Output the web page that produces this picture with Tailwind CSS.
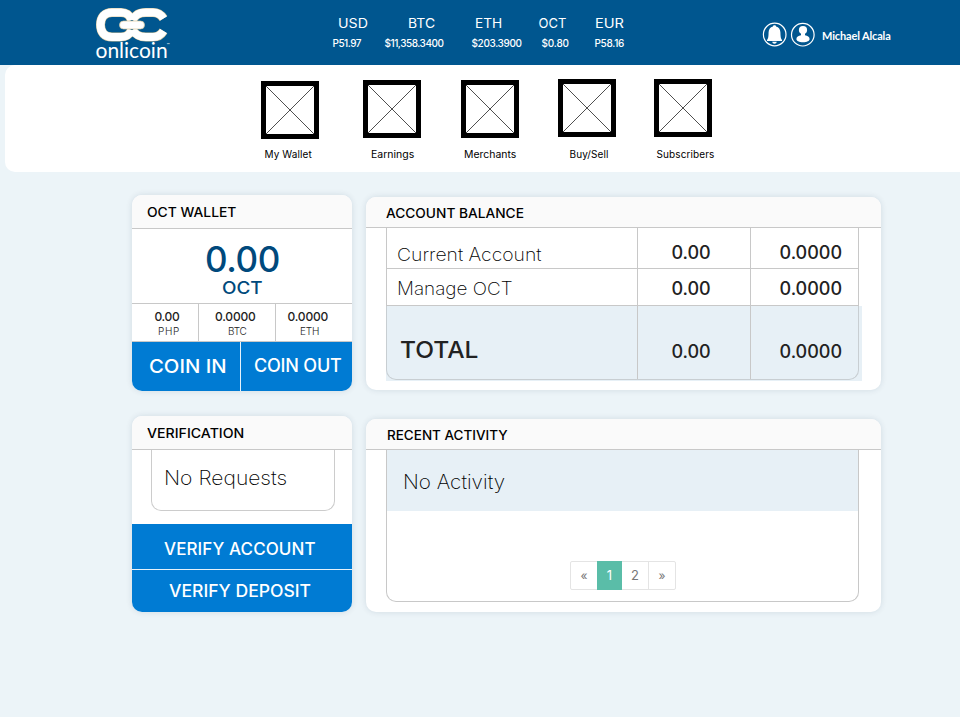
<!DOCTYPE html>
<html lang="en">
<head>
<meta charset="utf-8">
<title>Onlicoin Dashboard</title>
<script src="https://cdn.jsdelivr.net/npm/@tailwindcss/browser@4"></script>
</head>
<body class="bg-[#ecf4f8] font-['Inter',sans-serif] text-black whitespace-nowrap leading-none w-[960px] h-[717px] overflow-hidden">

<header class="flex h-[65px] bg-[#00568f] text-white">
  <div class="ml-[95px] w-[237px] pt-[7px]">
    <svg class="block" width="73" height="36" viewBox="95 7 73 36" fill="none">
      <g stroke="#d9c79c" stroke-width="9">
        <path d="M131.500 20C129.500 15 127 12.500 121 12.500H112C104.500 12.500 100.500 17 100.500 24.800S104.500 37 112 37H121C127 37 129.500 34.500 131.500 30"/>
        <path d="M163.500 18.500C161 14.500 158 12.500 153 12.500H146C138.500 12.500 135.500 15 132.500 20M163.500 31C161 35 158 37 153 37H146C138.500 37 135.500 34.500 132.500 30"/>
      </g>
      <g stroke="#fff" stroke-width="8">
        <path d="M131.500 20C129.500 15 127 12.500 121 12.500H112C104.500 12.500 100.500 17 100.500 24.800S104.500 37 112 37H121C127 37 129.500 34.500 131.500 30"/>
        <path d="M163.500 18.500C161 14.500 158 12.500 153 12.500H146C138.500 12.500 135.500 15 132.500 20M163.500 31C161 35 158 37 153 37H146C138.500 37 135.500 34.500 132.500 30"/>
      </g>
      <rect x="119.500" y="21" width="25" height="8" rx="4" fill="#fff" stroke="#d9c79c" stroke-width=".7"/>
    </svg>
    <div class="flex items-start -mt-[3px] pl-[0.500px] font-['Lato'] text-[21px] leading-[20px]">onlicoin<span class="-ml-px text-[4px] leading-[10px]">™</span></div>
  </div>
  <div class="w-[430px]">
    <div class="grid grid-cols-[70px_67.500px_63.500px_56px_60px] pl-[5.500px] pt-[17px] text-[13px]">
      <span class="origin-left scale-x-[1.09]">USD</span><span class="origin-left scale-x-[1.07]">BTC</span><span class="origin-left scale-x-[1.05]">ETH</span><span>OCT</span><span class="origin-left scale-x-[1.12]">EUR</span>
    </div>
    <div class="grid grid-cols-[52px_87px_70px_53px_60px] pl-[0.500px] pt-[8px] text-[10px] font-medium">
      <span class="tracking-[-0.5px]">P51.97</span><span class="tracking-[-0.47px]">$11,358.3400</span><span class="tracking-[-0.37px]">$203.3900</span><span class="tracking-[-0.18px]">$0.80</span><span class="tracking-[-0.3px]">P58.16</span>
    </div>
  </div>
  <div class="flex items-center pb-[1px] pt-[5px]">
    <svg width="25" height="25" viewBox="0 0 25 25" fill="none">
      <circle cx="12.700" cy="12.500" r="11.300" stroke="#fff" stroke-width="1.200"/>
      <path d="M12.500 3.200c.9 0 1.500.5 1.600 1.300 2.700.7 4.200 3 4.300 5.800.1 4.200.3 6.500 1.600 7.800v.9H5v-.9c1.300-1.300 1.500-3.600 1.600-7.800.1-2.800 1.600-5.100 4.300-5.800.1-.8.700-1.300 1.600-1.300ZM10.200 19.800h4.600c-.2 1.300-1.100 2-2.300 2s-2.100-.7-2.300-2Z" fill="#fff"/>
    </svg>
    <svg class="ml-[3px]" width="25" height="25" viewBox="0 0 25 25" fill="none">
      <circle cx="12.800" cy="12.700" r="11.300" stroke="#fff" stroke-width="1.200"/>
      <circle cx="13" cy="8" r="4.100" fill="#fff"/>
      <path d="M11 11h4v2.200c2.500.4 4.600 1.500 4.600 3.800 0 2-2.700 3.200-6.600 3.200S6.400 19 6.400 17c0-2.300 2.100-3.400 4.600-3.800Z" fill="#fff"/>
    </svg>
    <span class="ml-[7px] mt-[1px] font-['Lato'] text-[11px] font-bold tracking-[-0.15px]">Michael Alcala</span>
  </div>
</header>

<nav class="ml-[5px] flex h-[107px] rounded-l-[10px] bg-white pl-[256px] text-[10px]">
  <div class="w-[102px] pt-[16px]">
    <svg class="block" width="58" height="58" viewBox="0 0 58 58" fill="none"><rect x="2.500" y="2.500" width="53" height="53" stroke="#000" stroke-width="5"/><path d="M5 5 53 53M53 5 5 53" stroke="#222" stroke-width=".8"/></svg>
    <div class="ml-[3.500px] mt-[10px] tracking-[0.11px]">My Wallet</div>
  </div>
  <div class="w-[98px] pt-[15px]">
    <svg class="block" width="58" height="58" viewBox="0 0 58 58" fill="none"><rect x="2.500" y="2.500" width="53" height="53" stroke="#000" stroke-width="5"/><path d="M5 5 53 53M53 5 5 53" stroke="#222" stroke-width=".8"/></svg>
    <div class="ml-[7.500px] mt-[11px] origin-left scale-x-[1.05]">Earnings</div>
  </div>
  <div class="w-[97px] pt-[15px]">
    <svg class="block" width="58" height="58" viewBox="0 0 58 58" fill="none"><rect x="2.500" y="2.500" width="53" height="53" stroke="#000" stroke-width="5"/><path d="M5 5 53 53M53 5 5 53" stroke="#222" stroke-width=".8"/></svg>
    <div class="ml-[2.500px] mt-[11px] origin-left scale-x-[1.045]">Merchants</div>
  </div>
  <div class="w-[96px] pt-[14px]">
    <svg class="block" width="58" height="58" viewBox="0 0 58 58" fill="none"><rect x="2.500" y="2.500" width="53" height="53" stroke="#000" stroke-width="5"/><path d="M5 5 53 53M53 5 5 53" stroke="#222" stroke-width=".8"/></svg>
    <div class="ml-[11.500px] mt-[12px] tracking-[0.1px]">Buy/Sell</div>
  </div>
  <div class="pt-[14px]">
    <svg class="block" width="58" height="58" viewBox="0 0 58 58" fill="none"><rect x="2.500" y="2.500" width="53" height="53" stroke="#000" stroke-width="5"/><path d="M5 5 53 53M53 5 5 53" stroke="#222" stroke-width=".8"/></svg>
    <div class="ml-[2.500px] mt-[12px] tracking-[0.1px]">Subscribers</div>
  </div>
</nav>

<main class="flex gap-[14px] pl-[132px] pt-[23px]">
  <div class="flex w-[220px] flex-col gap-[25px]">
    <section class="h-[196px] overflow-hidden rounded-[10px] bg-white shadow-[0_0_6px_rgba(0,40,70,0.12)]">
      <h2 class="h-[34px] border-b border-[#c8c8c8] bg-[#fafafa] pl-[15px] pt-[11px] text-[13px] font-medium"><span class="inline-block origin-left scale-x-[1.065]">OCT WALLET</span></h2>
      <div class="h-[75px] border-b border-[#c8c8c8] text-[#00497c]">
        <div class="pl-[73px] pt-[13px] text-[35px] font-medium tracking-[-0.4px]">0.00</div>
        <div class="pl-[90px] pt-[2.500px] text-[17px] font-medium"><span class="inline-block origin-left scale-x-[1.11]">OCT</span></div>
      </div>
      <div class="flex h-[38px] border-b border-[#c8c8c8] text-[12px] font-medium text-[#222]">
        <div class="w-[67px] border-r border-[#c8c8c8] pt-[7px]"><div class="pl-[22.500px] tracking-[-0.33px]">0.00</div><div class="pl-[26px] pt-[3px] text-[10px] font-light tracking-[0.6px]">PHP</div></div>
        <div class="w-[77px] border-r border-[#c8c8c8] pt-[7px]"><div class="pl-[16px] tracking-[-0.2px]">0.0000</div><div class="pl-[29px] pt-[3px] text-[10px] font-light tracking-[-0.24px]">BTC</div></div>
        <div class="pt-[7px]"><div class="pl-[11.500px] tracking-[-0.2px]">0.0000</div><div class="pl-[24px] pt-[3px] text-[10px] font-light tracking-[-0.15px]">ETH</div></div>
      </div>
      <div class="flex h-[49px] bg-[#007bd3] font-medium text-white">
        <button class="flex w-[109px] items-start border-r border-white/90 pl-[16.500px] pt-[15px] text-[19px] leading-none"><span class="origin-left scale-x-[1.067]">COIN IN</span></button>
        <button class="flex items-start pl-[13px] pt-[15px] text-[18px] leading-none tracking-[-0.2px]">COIN OUT</button>
      </div>
    </section>

    <section class="h-[196px] overflow-hidden rounded-[10px] bg-white shadow-[0_0_6px_rgba(0,40,70,0.12)]">
      <h2 class="h-[34px] border-b border-[#c8c8c8] bg-[#fafafa] pl-[14.500px] pt-[11px] text-[13px] font-medium"><span class="inline-block origin-left scale-x-[1.088]">VERIFICATION</span></h2>
      <div class="ml-[19px] h-[61px] w-[184px] rounded-b-[10px] border border-t-0 border-[#ccc] pl-[12px] pt-[19px] text-[19.500px] font-extralight"><span class="inline-block origin-left scale-x-[1.08]">No Requests</span></div>
      <div class="mt-[13px] h-[88px] bg-[#007bd3] text-[17px] font-medium text-white">
        <button class="flex h-[46px] w-full items-start border-b border-white/90 pl-[32px] pt-[16.500px] leading-none tracking-[0.1px]">VERIFY ACCOUNT</button>
        <button class="flex w-full items-start pl-[37px] pt-[12.500px] leading-none"><span class="origin-left scale-x-[1.033]">VERIFY DEPOSIT</span></button>
      </div>
    </section>
  </div>

  <div class="flex w-[515px] flex-col gap-[29px] pt-[2px]">
    <section class="h-[193px] overflow-hidden rounded-[10px] bg-white shadow-[0_0_6px_rgba(0,40,70,0.12)]">
      <h2 class="h-[31px] border-b border-[#c8c8c8] bg-[#fafafa] pl-[19.500px] pt-[10px] text-[13px] font-medium"><span class="inline-block origin-left scale-x-[1.055]">ACCOUNT BALANCE</span></h2>
      <div class="ml-[20px] w-[476px] text-[18px] text-[#222]">
        <div class="grid h-[41px] w-[473px] grid-cols-[251px_113px_1fr] divide-x divide-[#c8c8c8] border-x border-b border-[#c8c8c8]">
          <div class="pl-[9.500px] pt-[17.500px] font-extralight text-black"><span class="inline-block origin-left scale-x-[1.075]">Current Account</span></div>
          <div class="pl-[33.500px] pt-[15.500px] font-medium tracking-[-0.08px]">0.00</div>
          <div class="pl-[28.500px] pt-[15.500px] font-medium">0.0000</div>
        </div>
        <div class="grid h-[37px] w-[473px] grid-cols-[251px_113px_1fr] divide-x divide-[#c8c8c8] border-x border-b border-[#c8c8c8]">
          <div class="pl-[10px] pt-[11px] font-extralight text-black"><span class="inline-block origin-left scale-x-[1.05]">Manage OCT</span></div>
          <div class="pl-[33.500px] pt-[10.500px] font-medium tracking-[-0.08px]">0.00</div>
          <div class="pl-[28.500px] pt-[10.500px] font-medium">0.0000</div>
        </div>
        <div class="h-[75px] bg-[#e7f0f6]">
          <div class="grid h-[74px] w-[473px] grid-cols-[251px_113px_1fr] divide-x divide-[#c8c8c8] rounded-b-[10px] border border-t-0 border-[#c8ced2] font-medium">
            <div class="pl-[12.500px] pt-[33px] text-[23px]"><span class="inline-block origin-left scale-x-[1.065]">TOTAL</span></div>
            <div class="pl-[33.500px] pt-[36.500px] tracking-[-0.08px]">0.00</div>
            <div class="pl-[28.500px] pt-[36.500px]">0.0000</div>
          </div>
        </div>
      </div>
    </section>

    <section class="h-[193px] overflow-hidden rounded-[10px] bg-white shadow-[0_0_6px_rgba(0,40,70,0.12)]">
      <h2 class="h-[31px] border-b border-[#c8c8c8] bg-[#fafafa] pl-[20.500px] pt-[10px] text-[13px] font-medium"><span class="inline-block origin-left scale-x-[1.037]">RECENT ACTIVITY</span></h2>
      <div class="ml-[20px] h-[152px] w-[473px] rounded-b-[10px] border border-t-0 border-[#c8c8c8]">
        <div class="h-[61px] bg-[#e7f0f6] pl-[16px] pt-[22.500px] text-[19.500px] font-extralight"><span class="inline-block origin-left scale-x-[1.06]">No Activity</span></div>
        <div class="ml-[183px] mt-[50px] flex h-[29px] w-[106px] rounded-[2px] border border-[#e4e4e4] text-center text-[13px] leading-[27px] text-[#777]">
          <span class="w-[26px] text-[12px]">«</span><span class="-my-px w-[25px] bg-[#5abda8] leading-[29px] text-white">1</span><span class="w-[27px] border-r border-[#e4e4e4]">2</span><span class="flex-1 text-[12px]">»</span>
        </div>
      </div>
    </section>
  </div>
</main>
</body>
</html>
